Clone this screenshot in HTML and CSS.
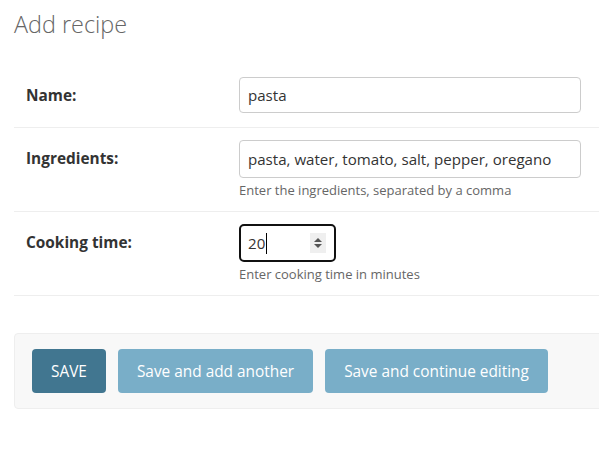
FILE: index.html
```html
<!DOCTYPE html>
<html lang="en">
<head>
<meta charset="utf-8">
<title>Add recipe</title>
<link rel="stylesheet" href="styles.css">
</head>
<body>
<div class="content">
  <h1 class="page-title">Add recipe</h1>
  <form class="recipe-form">
    <div class="fieldset">
      <div class="form-row">
        <label class="field-label">Name:</label>
        <div class="field-box">
          <input class="text-input text-input--name" type="text" value="pasta">
        </div>
      </div>
      <div class="form-row">
        <label class="field-label">Ingredients:</label>
        <div class="field-box">
          <input class="text-input" type="text" value="pasta, water, tomato, salt, pepper, oregano">
          <div class="help">Enter the ingredients, separated by a comma</div>
        </div>
      </div>
      <div class="form-row">
        <label class="field-label">Cooking time:</label>
        <div class="field-box">
          <div class="number-input">
            <span class="number-value">20</span><span class="caret"></span>
            <span class="spinner">
              <svg width="16" height="20" viewBox="0 0 16 20">
                <path d="M8 5 L12 9 L4 9 Z" fill="#555"/>
                <path d="M4 11 L12 11 L8 15 Z" fill="#555"/>
              </svg>
            </span>
          </div>
          <div class="help">Enter cooking time in minutes</div>
        </div>
      </div>
    </div>
    <div class="submit-row">
      <button type="button" class="btn btn--default">SAVE</button>
      <button type="button" class="btn">Save and add another</button>
      <button type="button" class="btn">Save and continue editing</button>
    </div>
  </form>
</div>
</body>
</html>
```
FILE: styles.css
```css
html, body {
  margin: 0;
  padding: 0;
  overflow: hidden;
  background: #fff;
}
body {
  font-family: "Open Sans", "Noto Sans", sans-serif;
  color: #333;
}
.content {
  padding-left: 14px;
  width: 600px;
}
.page-title {
  margin: 0;
  padding-top: 6px;
  height: 65px;
  box-sizing: border-box;
  font-size: 23.4px;
  font-weight: 300;
  color: #666;
  line-height: 36px;
}
.fieldset {
  border-bottom: 1px solid #eee;
}
.form-row {
  display: flex;
  padding: 12px;
  border-bottom: 1px solid #eee;
}
.form-row:last-child {
  border-bottom: none;
}
.field-label {
  width: 213px;
  flex: none;
  font-weight: 700;
  font-size: 15.4px;
  line-height: 38px;
  color: #333;
}
.field-box {
  display: flex;
  flex-direction: column;
}
.text-input {
  box-sizing: border-box;
  width: 342px;
  height: 38px;
  margin: 0;
  padding: 0 8px;
  border: 1px solid #ccc;
  border-radius: 4px;
  font-family: inherit;
  font-size: 15.1px;
  color: #333;
  background: #fff;
}
.text-input--name {
  height: 36px;
}
.help {
  margin-top: 4px;
  font-size: 13px;
  line-height: 17px;
  color: #666;
}
.number-input {
  box-sizing: border-box;
  width: 97px;
  height: 38px;
  border: 2px solid #111;
  border-radius: 5px;
  display: flex;
  align-items: center;
  padding-left: 7px;
  font-size: 15.1px;
}
.number-value {
  color: #333;
}
.caret {
  width: 1px;
  height: 21px;
  background: #000;
  margin-left: 1px;
}
.spinner {
  margin-left: auto;
  margin-right: 8px;
  width: 16px;
  height: 20px;
  background: #efefef;
  display: flex;
}
.submit-row {
  margin-top: 37px;
  display: flex;
  gap: 12px;
  padding: 15px 17px 15px;
  background: #f8f8f8;
  border: 1px solid #eee;
  border-radius: 4px;
}
.btn {
  height: 44px;
  padding: 0 19px;
  border: none;
  border-radius: 4px;
  background: #79aec8;
  color: #fff;
  font-family: inherit;
  font-size: 15.4px;
  cursor: pointer;
}
.btn--default {
  background: #417690;
}
```
